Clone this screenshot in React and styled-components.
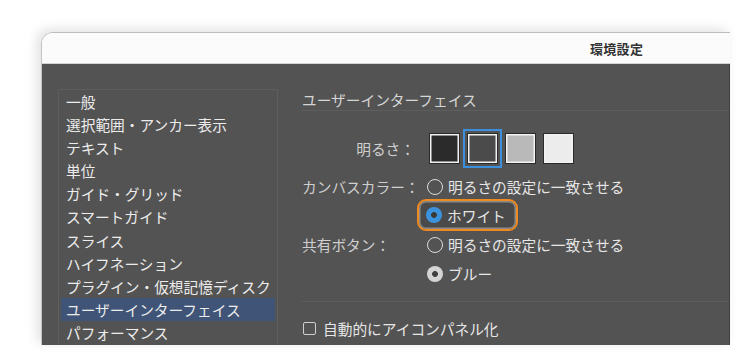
import React from "react";
import styled, { createGlobalStyle } from "styled-components";

const GlobalStyle = createGlobalStyle`
  html, body {
    margin: 0;
    padding: 0;
    background: #ffffff;
  }
  body {
    font-family: "Noto Sans CJK JP", "Noto Sans", sans-serif;
    width: 750px;
    height: 363px;
    overflow: hidden;
  }
`;

const categories = [
  "一般",
  "選択範囲・アンカー表示",
  "テキスト",
  "単位",
  "ガイド・グリッド",
  "スマートガイド",
  "スライス",
  "ハイフネーション",
  "プラグイン・仮想記憶ディスク",
  "ユーザーインターフェイス",
  "パフォーマンス",
];

const swatches = [
  { fill: "#2b2b2b" },
  { fill: "#4b4b4b", selected: true },
  { fill: "#b9b9b9" },
  { fill: "#ececec" },
];

function Radio({ state, label }) {
  return (
    <Option>
      <RadioDot $state={state} />
      <span>{label}</span>
    </Option>
  );
}

export default function App() {
  return (
    <>
      <GlobalStyle />
      <Stage>
        <Window>
          <TitleBar>
            <Title>環境設定</Title>
          </TitleBar>
          <Body>
            <CategoryList>
              {categories.map((c) => (
                <CategoryItem key={c} $active={c === "ユーザーインターフェイス"}>
                  {c}
                </CategoryItem>
              ))}
            </CategoryList>
            <Panel>
              <SectionHeader>ユーザーインターフェイス</SectionHeader>
              <SwatchRow>
                <Label $right>明るさ：</Label>
                <Swatches>
                  {swatches.map((s, i) => (
                    <Swatch key={i} $fill={s.fill} $selected={s.selected} />
                  ))}
                </Swatches>
              </SwatchRow>
              <Row>
                <Label>カンバスカラー：</Label>
                <Radio state="off" label="明るさの設定に一致させる" />
              </Row>
              <Row>
                <Label />
                <Highlight>
                  <Radio state="blue" label="ホワイト" />
                </Highlight>
              </Row>
              <Row>
                <Label>共有ボタン：</Label>
                <Radio state="off" label="明るさの設定に一致させる" />
              </Row>
              <Row>
                <Label />
                <Radio state="gray" label="ブルー" />
              </Row>
              <Divider />
              <CheckRow>
                <CheckBox />
                <span>自動的にアイコンパネル化</span>
              </CheckRow>
            </Panel>
          </Body>
        </Window>
      </Stage>
    </>
  );
}

const Stage = styled.div`
  padding: 32px 20px 0 41px;
  height: 313px;
`;

const Window = styled.div`
  width: 689px;
  height: 313px;
  border-radius: 12px 0 0 0;
  overflow: hidden;
  box-sizing: border-box;
  border-top: 1px solid #bdbdbd;
  border-left: 1px solid #c4c4c4;
  box-shadow: -4px -3px 12px rgba(0, 0, 0, 0.12);
  display: flex;
  flex-direction: column;
`;

const TitleBar = styled.div`
  height: 30px;
  background: #fbfbfb;
  border-bottom: 1px solid #d4d4d4;
  display: flex;
  align-items: center;
  padding-left: 548px;
`;

const Title = styled.span`
  font-size: 13px;
  font-weight: 700;
  color: #333333;
  letter-spacing: 0.3px;
`;

const Body = styled.div`
  flex: 1;
  background: #535353;
  border-right: 1px solid #404040;
  display: flex;
  padding: 25px 0 0 16px;
  gap: 24px;
  color: #e6e6e6;
  font-size: 14.7px;
`;

const CategoryList = styled.div`
  width: 220px;
  flex: none;
  align-self: stretch;
  box-sizing: border-box;
  border: 1px solid #5f5f5f;
  border-bottom: none;
  border-radius: 2px 2px 0 0;
  padding: 0 2px;
  display: flex;
  flex-direction: column;
`;

const CategoryItem = styled.div`
  height: 23.1px;
  line-height: 23px;
  padding-left: 5px;
  white-space: nowrap;
  color: #ececec;
  background: ${(p) => (p.$active ? "#3f5477" : "transparent")};
`;

const Panel = styled.div`
  flex: 1;
  display: flex;
  flex-direction: column;
`;

const SectionHeader = styled.div`
  height: 20px;
  line-height: 20px;
  border-bottom: 1px solid #5e5e5e;
  color: #d6d6d6;
  margin-top: 1px;
`;

const Row = styled.div`
  display: grid;
  grid-template-columns: 125px auto;
  align-items: center;
  height: 29px;
  color: #d2d2d2;
`;

const SwatchRow = styled(Row)`
  height: 38px;
  margin-top: 18px;
  margin-bottom: 5px;
`;

const Label = styled.div`
  white-space: nowrap;
  text-align: ${(p) => (p.$right ? "right" : "left")};
  padding-right: ${(p) => (p.$right ? "12px" : "0")};
  color: #cfcfcf;
`;

const Swatches = styled.div`
  display: flex;
  gap: 7px;
  padding-left: 2px;
`;

const Swatch = styled.div`
  width: 31px;
  height: 31px;
  box-sizing: border-box;
  border: 1px solid #2a2a2a;
  box-shadow: inset 0 0 0 1.5px #f2f2f2;
  background: ${(p) => p.$fill};
  outline: ${(p) => (p.$selected ? "2px solid #3b8fdc" : "none")};
  outline-offset: 2px;
`;

const Option = styled.div`
  display: flex;
  align-items: center;
  gap: 5px;
  white-space: nowrap;
  color: #e6e6e6;
`;

const RadioDot = styled.span`
  width: 16px;
  height: 16px;
  box-sizing: border-box;
  border-radius: 50%;
  flex: none;
  border: ${(p) => (p.$state === "off" ? "1.5px solid #dcdcdc" : "none")};
  background: ${(p) =>
    p.$state === "blue"
      ? "radial-gradient(circle, #3a3a3a 0 2.6px, #3c93dd 3.2px)"
      : p.$state === "gray"
      ? "radial-gradient(circle, #404040 0 2.6px, #d4d4d4 3.2px)"
      : "transparent"};
`;

const Highlight = styled.div`
  justify-self: start;
  margin-left: -10px;
  margin-top: -2px;
  height: 32px;
  box-sizing: border-box;
  padding: 0 10px 0 7px;
  display: flex;
  align-items: center;
  border: 2px solid #ee8a1f;
  border-radius: 9px;
  box-shadow: inset 0 0 0 1.5px #8b8b8b;
  background: #4a4a4a;
`;

const Divider = styled.div`
  height: 1px;
  background: #5d5d5d;
  margin-top: 13px;
`;

const CheckRow = styled.div`
  display: flex;
  align-items: center;
  gap: 7px;
  height: 28px;
  margin-top: 12px;
  padding-left: 1px;
  color: #e6e6e6;
`;

const CheckBox = styled.span`
  width: 13px;
  height: 13px;
  box-sizing: border-box;
  border: 1.5px solid #cfcfcf;
  border-radius: 2px;
  flex: none;
`;
